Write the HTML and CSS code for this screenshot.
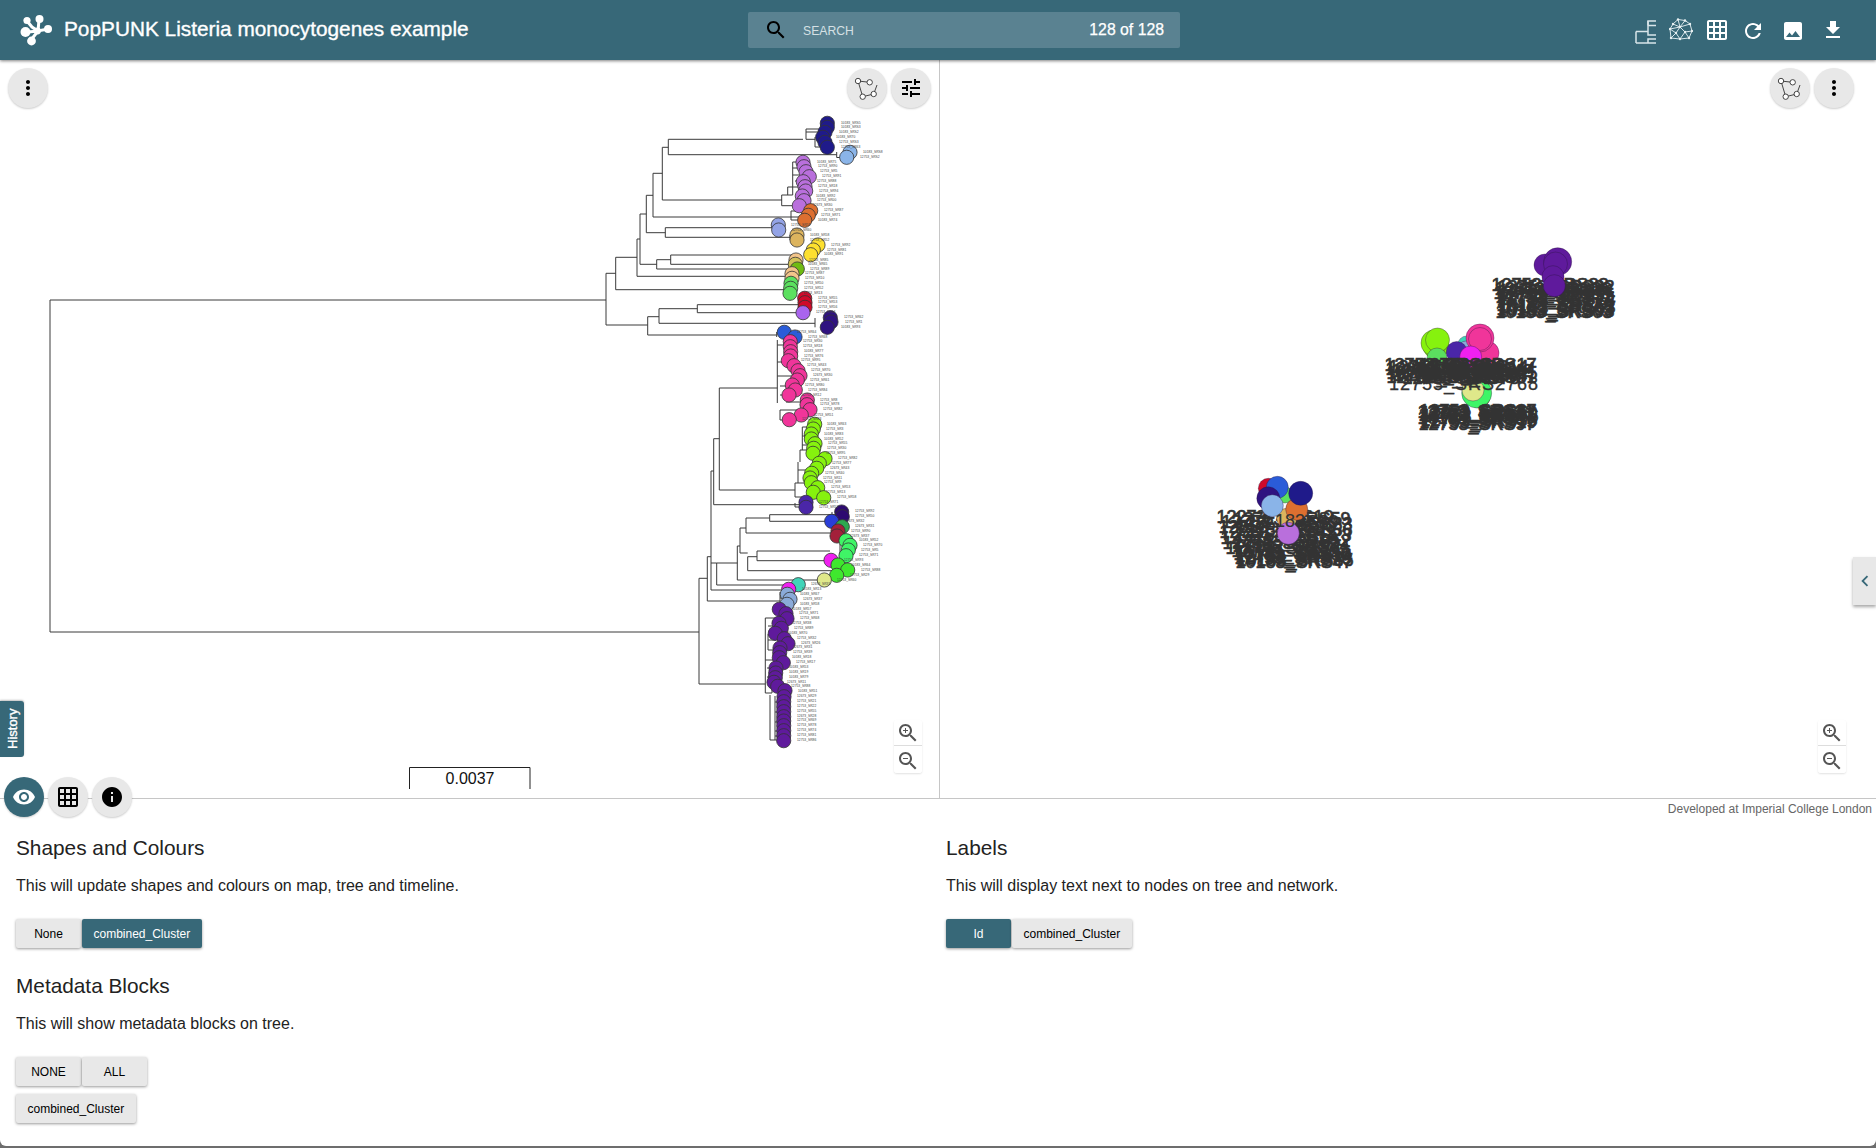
FILE: index.html
```html
<!DOCTYPE html>
<html lang="en">
<head>
<meta charset="utf-8">
<title>PopPUNK Listeria monocytogenes example</title>
<link rel="stylesheet" href="styles.css">
</head>
<body>
<div class="app">
<header class="topbar">
  <div class="brand">
    <svg class="logo" viewBox="0 0 36 32" aria-hidden="true">
      <path class="logo-link" d="M10 18 L20 17 M21 6 L20 17 L30 15 M20 17 L13 26 M9 7 L14 13 L20 17"/>
      <circle cx="9" cy="6.5" r="3.6"/><circle cx="21.5" cy="5" r="4"/><circle cx="30" cy="15" r="4"/><circle cx="7.5" cy="18" r="5"/><circle cx="13.5" cy="27" r="4.4"/><circle cx="19.5" cy="17" r="3.4"/>
    </svg>
    <span class="title">PopPUNK Listeria monocytogenes example</span>
  </div>
  <div class="search">
    <svg class="icon search-icon" viewBox="0 0 24 24"><path d="M15.5 14h-.79l-.28-.27C15.41 12.59 16 11.11 16 9.5 16 5.91 13.09 3 9.5 3S3 5.91 3 9.5 5.91 16 9.5 16c1.61 0 3.09-.59 4.23-1.57l.27.28v.79l5 4.99L20.49 19l-4.99-5zm-6 0C7.01 14 5 11.99 5 9.5S7.01 5 9.5 5 14 7.01 14 9.5 11.99 14 9.5 14z"/></svg>
    <span class="search-label">SEARCH</span>
    <span class="search-count">128 of 128</span>
  </div>
  <nav class="tools">
    <svg class="tool tool-line" viewBox="0 0 24 24"><path d="M2 13.5V25M2 13.5H14V7.5H22M14 7.5V17H22M14 7.5V3H22M2 25H14V21H22M14 25H22"/><path d="M14 3V7.5"/></svg>
    <svg class="tool tool-net" viewBox="0 0 24 24"><path d="M9 1.5L16 2.5L21 6L23 13L20 20L11 21L2 20L1 11L4 6ZM9 1.5L11 9L16 2.5M4 6L11 9L21 6M1 11L11 9L16 14L23 13M1 11L7 15L11 9M7 15L2 20M7 15L11 21M16 14L11 21M16 14L20 20M16 14L11 9"/><g class="net-dots"><circle cx="9" cy="1.5" r="1.2"/><circle cx="16" cy="2.5" r="1.2"/><circle cx="21" cy="6" r="1.2"/><circle cx="23" cy="13" r="1.2"/><circle cx="20" cy="20" r="1.2"/><circle cx="11" cy="21" r="1.2"/><circle cx="2" cy="20" r="1.2"/><circle cx="1" cy="11" r="1.2"/><circle cx="4" cy="6" r="1.2"/><circle cx="11" cy="9" r="1.2"/><circle cx="16" cy="14" r="1.2"/><circle cx="7" cy="15" r="1.2"/></g></svg>
    <svg class="tool tool-grid" viewBox="2 2 20 20"><path d="M20 2H4c-1.1 0-2 .9-2 2v16c0 1.1.9 2 2 2h16c1.1 0 2-.9 2-2V4c0-1.1-.9-2-2-2zM8 20H4v-4h4v4zm0-6H4v-4h4v4zm0-6H4V4h4v4zm6 12h-4v-4h4v4zm0-6h-4v-4h4v4zm0-6h-4V4h4v4zm6 12h-4v-4h4v4zm0-6h-4v-4h4v4zm0-6h-4V4h4v4z"/></svg>
    <svg class="tool tool-refresh" viewBox="0 0 24 24"><path d="M17.65 6.35C16.2 4.9 14.21 4 12 4c-4.42 0-7.99 3.58-7.99 8s3.57 8 7.99 8c3.73 0 6.84-2.55 7.73-6h-2.08c-.82 2.33-3.04 4-5.65 4-3.31 0-6-2.69-6-6s2.69-6 6-6c1.66 0 3.14.69 4.22 1.78L13 11h7V4l-2.35 2.35z"/></svg>
    <svg class="tool tool-image" viewBox="0 0 24 24"><path d="M21 19V5c0-1.1-.9-2-2-2H5c-1.1 0-2 .9-2 2v14c0 1.1.9 2 2 2h14c1.1 0 2-.9 2-2zM8.5 13.5l2.5 3.01L14.5 12l4.5 6H5l3.5-4.5z"/></svg>
    <svg class="tool tool-download" viewBox="0 0 24 24"><path d="M19 9h-4V3H9v6H5l7 7 7-7zM5 18v2h14v-2H5z"/></svg>
  </nav>
</header>

<section class="viewers">
  <div class="pane pane-tree">
    <svg class="canvas" viewBox="0 60 940 738">
      <path class="branches" d="M50 300V632M50 300H606M50 632H699
      M606 273.3V325M606 300H606M606 273.3H615.7M615.7 257.3V289.7M615.7 289.7H785M615.7 257.3H637M637 239V276.3M637 276.3H790M637 239H640M640 214V264.3M640 264.3H656.7M656.7 259.7V269M656.7 269H797M656.7 259.7H670.7M670.7 255V264.3M670.7 255H795M670.7 264.3H795M640 214H646.3M646.3 195.3V232.7M646.3 232.7H665.3M665.3 227.7V237.3M665.3 227.7H778M665.3 237.3H795M646.3 195.3H653M653 173.3V217M653 217H805M653 173.3H662.3M662.3 147.3V200M662.3 200H782M662.3 147.3H668.3M668.3 139.3V154.7M668.3 139.3H803M668.3 154.7H836.7
      M606 325H647.7M647.7 316.7V335M647.7 335H776.7M776.7 332V337M647.7 316.7H659M659 308.7V323.3M659 308.7H697.3M697.3 304.7V312.7M697.3 304.7H798M697.3 312.7H800M659 323.3H815M815 318V327.3
      M806 129V139.3M806 129H825M806 132H824M806 139.3H815M815 137V147H825M836.7 152V157.5H846
      M781.7 195V205.7H795M781.7 195H792.7M792.7 162V195M792.7 162H803M792.7 168H804M792.7 175H806M795 181H803M787.7 187V195M787.7 187H805
      M791 211V220H805M791 211H808M775 225V230H778M790 235V240H797
      M699 578.3V684M699 684H765.3M699 578.3H707.3M707.3 556.7V601M707.3 601H780M707.3 556.7H711M711 471V590M711 590H785M711 471H713.7M713.7 438.7V504.7M713.7 504.7H800M713.7 438.7H719.3M719.3 388V490M719.3 388H777.3M719.3 490H795
      M711 563H716.7M716.7 563V585M716.7 585H792M716.7 563H737.3M737.3 546V580M737.3 580H820M737.3 546H740M740 528V553M740 528H746M746 518V533M746 533H832M746 518H769.7M769.7 514.7V521.3M769.7 514.7H838M769.7 521.3H830M740 553H747.7M747.7 556.7V570.7M747.7 556.7H757M757 551V560.7M757 551H830M757 560.7H825M747.7 570.7H835
      M777.3 340V403M777.3 345H788M777.3 362H788M777.3 376H795M780 386H790M780 395H789M780 410V420H789M780 410H807M786 402H807
      M795 483V497M795 483H812M795 497H823M798 462V483M798 470H815M800 450V462M800 450H812M802.3 427V450M802.3 427H814M802.3 436H811M802.3 445H815
      M795 503V507H806M832 512V517H842M832 530V536H837M840 544V556H846M835 565V575H838
      M780 592V604M780 598H788M765.3 618V693M765.3 618H778M768 626H779M768 634V650M768 640H776M768 650H780M765.3 660H779M767 668H776M767 677H775M767 682H774M765.3 693H772V688H777M770 695V740H783M775 696V740M775 702H783M775 712H783M775 722H783M775 731H783M775 736H783"/>
      <g class="tree-nodes">
        <g class="c-navy"><circle cx="827.3" cy="123.3"/><circle cx="827.3" cy="127.3"/><circle cx="825" cy="132.3"/><circle cx="822.7" cy="137.3"/><circle cx="825" cy="142.3"/><circle cx="827.3" cy="147.3"/></g>
        <g class="c-sky"><circle cx="850" cy="152.3"/><circle cx="846.7" cy="157.3"/></g>
        <g class="c-lilac"><circle cx="803" cy="162.3"/><circle cx="804" cy="166.7"/><circle cx="806" cy="171.7"/><circle cx="809.3" cy="176.7"/><circle cx="803.3" cy="181.7"/><circle cx="805" cy="186.7"/><circle cx="805.7" cy="191"/><circle cx="802.3" cy="196"/><circle cx="804" cy="200.7"/><circle cx="799.3" cy="205.7"/></g>
        <g class="c-orange"><circle cx="810.7" cy="210.7"/><circle cx="808.3" cy="215.3"/><circle cx="804.7" cy="220.3"/></g>
        <g class="c-peri"><circle cx="778.3" cy="225"/><circle cx="778.7" cy="230"/></g>
        <g class="c-tan"><circle cx="797" cy="235"/><circle cx="797" cy="240"/></g>
        <g class="c-yellow"><circle cx="818" cy="245"/><circle cx="813.3" cy="250"/><circle cx="810.7" cy="254.7"/></g>
        <g class="c-peach"><circle cx="796" cy="260"/></g>
        <g class="c-khaki"><circle cx="795.3" cy="264.3"/></g>
        <g class="c-olive"><circle cx="797.3" cy="269"/></g>
        <g class="c-peach"><circle cx="792" cy="273.7"/><circle cx="792" cy="278.3"/></g>
        <g class="c-green"><circle cx="791" cy="283.3"/><circle cx="790.7" cy="288.3"/><circle cx="790" cy="293.3"/></g>
        <g class="c-crimson"><circle cx="804.7" cy="298.3"/><circle cx="805" cy="302.7"/><circle cx="805" cy="307.3"/></g>
        <g class="c-violet"><circle cx="803" cy="312.7"/></g>
        <g class="c-ink"><circle cx="830.3" cy="317.7"/><circle cx="831" cy="322"/><circle cx="827.3" cy="327.3"/></g>
        <g class="c-blue"><circle cx="784.3" cy="332.3"/><circle cx="795" cy="337"/></g>
        <g class="c-pink"><circle cx="790.3" cy="341.7"/><circle cx="790.3" cy="346.7"/><circle cx="790.7" cy="351.7"/><circle cx="790.7" cy="356"/><circle cx="788.3" cy="360.7"/><circle cx="794" cy="365.7"/><circle cx="798" cy="370.7"/><circle cx="800" cy="375.7"/><circle cx="797.3" cy="380"/><circle cx="792.3" cy="385"/><circle cx="795.3" cy="390"/><circle cx="789" cy="395"/><circle cx="807.3" cy="400"/><circle cx="807" cy="404.7"/><circle cx="810" cy="409.7"/><circle cx="801.3" cy="415"/><circle cx="789.3" cy="419.7"/></g>
        <g class="c-lime"><circle cx="814.7" cy="424.3"/><circle cx="813.3" cy="429"/><circle cx="811.3" cy="434"/><circle cx="811.3" cy="439"/><circle cx="815" cy="443.7"/><circle cx="813.7" cy="448.3"/><circle cx="813" cy="453.3"/><circle cx="825" cy="458.7"/><circle cx="819.3" cy="463.3"/><circle cx="816.7" cy="468.3"/><circle cx="811.7" cy="473.3"/><circle cx="810" cy="478"/><circle cx="811.3" cy="482.7"/><circle cx="817.7" cy="487.7"/><circle cx="813.3" cy="492.3"/><circle cx="823.7" cy="497.7"/></g>
        <g class="c-indigo"><circle cx="806" cy="502.3"/><circle cx="806" cy="507.3"/></g>
        <g class="c-plum"><circle cx="841.7" cy="512"/><circle cx="842.3" cy="516.7"/></g>
        <g class="c-royal"><circle cx="831.7" cy="521.3"/></g>
        <g class="c-forest"><circle cx="842.3" cy="526.7"/></g>
        <g class="c-maroon"><circle cx="838" cy="531"/><circle cx="837" cy="536"/></g>
        <g class="c-mint"><circle cx="846" cy="540.7"/><circle cx="850" cy="545.3"/><circle cx="848.3" cy="550"/><circle cx="846" cy="555.7"/></g>
        <g class="c-magenta"><circle cx="831" cy="560.3"/></g>
        <g class="c-leaf"><circle cx="838" cy="565"/><circle cx="847.7" cy="570"/><circle cx="836.7" cy="575.3"/></g>
        <g class="c-pale"><circle cx="824.3" cy="580"/></g>
        <g class="c-teal"><circle cx="798.3" cy="584.7"/></g>
        <g class="c-magenta"><circle cx="788.7" cy="589.3"/></g>
        <g class="c-steel"><circle cx="787.3" cy="594.3"/><circle cx="790" cy="599.3"/><circle cx="787" cy="604.3"/></g>
        <g class="c-purple"><circle cx="779.3" cy="609.3"/><circle cx="786" cy="613.7"/><circle cx="787" cy="618.7"/><circle cx="779" cy="623.3"/><circle cx="781.3" cy="628.3"/><circle cx="775.3" cy="633.3"/><circle cx="784.3" cy="638.7"/><circle cx="788" cy="643.7"/><circle cx="780" cy="648"/><circle cx="779.7" cy="652.7"/><circle cx="779.3" cy="657.7"/><circle cx="783.3" cy="662.7"/><circle cx="776" cy="668"/><circle cx="775.7" cy="673"/><circle cx="775.3" cy="677.7"/><circle cx="774" cy="682.3"/><circle cx="777.7" cy="686.3"/><circle cx="785" cy="690.7"/><circle cx="784" cy="696.7"/><circle cx="783.7" cy="701.7"/><circle cx="783.7" cy="706.7"/><circle cx="783.7" cy="711.7"/><circle cx="783.7" cy="716.7"/><circle cx="783.7" cy="721"/><circle cx="783.7" cy="725.7"/><circle cx="783.7" cy="730.7"/><circle cx="783.7" cy="735.7"/><circle cx="783.7" cy="740.7"/></g>
      </g>
      <g class="leaf-labels">
        <text x="841" y="124">10183_SRS5</text><text x="841" y="128">10183_SRS3</text><text x="839" y="133">10183_SRS2</text><text x="836" y="138">10183_SR70</text><text x="839" y="143">12753_SRS3</text><text x="841" y="148">12753_SR63</text>
        <text x="863" y="153">10183_SRS8</text><text x="860" y="158">12753_SRS2</text>
        <text x="817" y="163">10183_SR75</text><text x="818" y="167">12753_SR90</text><text x="820" y="172">12753_SR5</text><text x="822" y="177">12753_SR91</text><text x="817" y="182">12753_SR88</text><text x="818" y="187">12753_SR18</text><text x="819" y="192">12753_SR94</text><text x="816" y="197">10183_SR92</text><text x="817" y="201">12753_SR00</text><text x="813" y="206">12673_SR30</text>
        <text x="824" y="211">12753_SR87</text><text x="821" y="216">12753_SR71</text><text x="818" y="221">10183_SR74</text>
        <text x="791" y="226">12753_SR59</text><text x="792" y="231">12753_SR60</text><text x="810" y="236">10183_SR58</text><text x="810" y="241">12753_SR52</text>
        <text x="831" y="246">12753_SR92</text><text x="827" y="251">12753_SR81</text><text x="824" y="255">10183_SR91</text>
        <text x="809" y="261">12753_SR85</text><text x="808" y="265">10183_SR65</text><text x="810" y="270">12753_SR89</text><text x="805" y="274">12753_SR87</text><text x="805" y="279">12753_SR10</text><text x="804" y="284">12753_SR50</text><text x="804" y="289">12753_SR52</text><text x="803" y="294">12753_SR13</text>
        <text x="818" y="299">12753_SR55</text><text x="818" y="303">12753_SR53</text><text x="818" y="308">12753_SR56</text><text x="816" y="313">12753_SR44</text>
        <text x="844" y="318">12753_SR62</text><text x="845" y="323">12753_SR1</text><text x="841" y="328">10183_SR93</text>
        <text x="797" y="333">12753_SR64</text><text x="808" y="338">12753_SR68</text>
        <text x="803" y="342">12753_SR30</text><text x="803" y="347">12753_SR18</text><text x="804" y="352">10183_SR77</text><text x="804" y="357">12753_SR76</text><text x="801" y="361">12753_SR95</text><text x="807" y="366">12753_SR43</text><text x="811" y="371">12753_SR70</text><text x="813" y="376">12673_SR30</text><text x="810" y="381">12753_SR61</text><text x="805" y="386">12753_SR80</text><text x="808" y="391">12753_SR84</text><text x="802" y="396">12753_SR12</text><text x="820" y="401">12753_SR8</text><text x="820" y="405">12753_SR78</text><text x="823" y="410">12753_SR82</text><text x="814" y="416">12753_SR51</text><text x="802" y="420">12753_SR83</text>
        <text x="827" y="425">10183_SR63</text><text x="826" y="430">12753_SR3</text><text x="824" y="435">10183_SR83</text><text x="824" y="440">10183_SR52</text><text x="828" y="444">12753_SR55</text><text x="827" y="449">12753_SR30</text><text x="826" y="454">12753_SR95</text><text x="838" y="459">12753_SR82</text><text x="832" y="464">12753_SR77</text><text x="830" y="469">12673_SR43</text><text x="825" y="474">12753_SR40</text><text x="823" y="479">12753_SR11</text><text x="824" y="483">12753_SR9</text><text x="831" y="488">12753_SR53</text><text x="826" y="493">12753_SR13</text><text x="837" y="498">12753_SR58</text>
        <text x="819" y="503">12753_SR71</text><text x="819" y="508">12753_SR52</text><text x="855" y="512">12753_SR92</text><text x="855" y="517">12753_SR50</text><text x="845" y="522">12673_SR32</text><text x="855" y="527">12673_SR31</text><text x="851" y="532">12753_SR90</text><text x="850" y="537">12673_SR37</text>
        <text x="859" y="541">10183_SR52</text><text x="863" y="546">12753_SR70</text><text x="861" y="551">12753_SR5</text><text x="859" y="556">12753_SR71</text><text x="844" y="561">12753_SR93</text><text x="851" y="566">10183_SR64</text><text x="861" y="571">12753_SR88</text><text x="850" y="576">12753_SR29</text><text x="837" y="581">12753_SR60</text><text x="811" y="585">12673_SR33</text>
        <text x="802" y="590">10183_SR13</text><text x="800" y="595">10183_SR67</text><text x="803" y="600">12673_SR37</text><text x="800" y="605">10183_SR58</text><text x="792" y="610">10183_SR57</text><text x="799" y="614">12753_SR71</text><text x="800" y="619">12753_SR68</text><text x="792" y="624">12753_SR38</text><text x="794" y="629">12753_SR89</text><text x="788" y="634">10183_SR70</text><text x="797" y="639">12753_SR32</text><text x="801" y="644">12673_SR26</text><text x="793" y="648">12673_SR31</text><text x="793" y="653">12753_SR39</text><text x="792" y="658">10183_SR18</text><text x="796" y="663">12753_SR17</text><text x="789" y="668">10183_SR53</text><text x="789" y="673">10183_SR19</text><text x="789" y="678">10183_SR79</text><text x="787" y="683">12673_SR11</text><text x="791" y="687">12753_SR88</text><text x="798" y="692">10183_SR51</text><text x="797" y="697">12673_SR29</text><text x="797" y="702">12753_SR21</text><text x="797" y="707">12753_SR22</text><text x="797" y="712">12753_SR55</text><text x="797" y="717">12673_SR28</text><text x="797" y="721">12753_SR69</text><text x="797" y="726">12753_SR78</text><text x="797" y="731">12753_SR74</text><text x="797" y="736">12753_SR81</text><text x="797" y="741">12753_SR86</text>
      </g>
      <path class="scale-line" d="M409.5 789V767.5H530V789"/>
      <text class="scale-text" x="470" y="784">0.0037</text>
    </svg>
    <button class="fab pos-tl"><svg class="icon" viewBox="0 0 24 24"><path d="M12 8c1.1 0 2-.9 2-2s-.9-2-2-2-2 .9-2 2 .9 2 2 2zm0 2c-1.1 0-2 .9-2 2s.9 2 2 2 2-.9 2-2-.9-2-2-2zm0 6c-1.1 0-2 .9-2 2s.9 2 2 2 2-.9 2-2-.9-2-2-2z"/></svg></button>
    <div class="fab-group">
      <button class="fab"><svg class="icon graph-icon" viewBox="0 0 24 24"><path d="M3 5L14.7 6.3M3 5L7.7 20.7L18.7 18L22 9"/><circle cx="3" cy="5" r="2.7"/><circle cx="14.7" cy="6.3" r="2.7"/><circle cx="18.7" cy="18" r="2.7"/><circle cx="7.7" cy="20.7" r="2.7"/></svg></button>
      <button class="fab"><svg class="icon" viewBox="0 0 24 24"><path d="M3 17v2h6v-2H3zM3 5v2h10V5H3zm10 16v-2h8v-2h-8v-2h-2v6h2zM7 9v2H3v2h4v2h2V9H7zm14 4v-2H11v2h10zm-6-4h2V7h4V5h-4V3h-2v6z"/></svg></button>
    </div>
    <button class="history">History</button>
    <div class="zoomer">
      <svg class="icon zoom-icon" viewBox="0 0 24 24"><path d="M15.5 14h-.79l-.28-.27C15.41 12.59 16 11.11 16 9.5 16 5.91 13.09 3 9.5 3S3 5.91 3 9.5 5.91 16 9.5 16c1.61 0 3.09-.59 4.23-1.57l.27.28v.79l5 4.99L20.49 19l-4.99-5zm-6 0C7.01 14 5 11.99 5 9.5S7.01 5 9.5 5 14 7.01 14 9.5 11.99 14 9.5 14zm2.5-4h-2v2H9v-2H7V9h2V7h1v2h2v1z"/></svg>
      <svg class="icon zoom-icon" viewBox="0 0 24 24"><path d="M15.5 14h-.79l-.28-.27C15.41 12.59 16 11.11 16 9.5 16 5.91 13.09 3 9.5 3S3 5.91 3 9.5 5.91 16 9.5 16c1.61 0 3.09-.59 4.23-1.57l.27.28v.79l5 4.99L20.49 19l-4.99-5zm-6 0C7.01 14 5 11.99 5 9.5S7.01 5 9.5 5 14 7.01 14 9.5 11.99 14 9.5 14zM7 9h5v1H7z"/></svg>
    </div>
  </div>
  <div class="pane pane-net">
    <svg class="canvas" viewBox="940 60 936 738">
      <g class="net-labels">
        <text x="1550" y="291">12753_SRS88</text><text x="1556" y="293">12753_SRS92</text><text x="1553" y="295">12673_SRS26</text><text x="1557" y="297">12753_SRS81</text><text x="1552" y="299">12753_SRS68</text><text x="1556" y="301">12753_SRS55</text><text x="1554" y="303">12753_SRS71</text><text x="1557" y="305">12753_SRS14</text>
        <text x="1555" y="311">10183_SRS79</text><text x="1557" y="313">10183_SRS53</text><text x="1555" y="315">10183_SRS63</text><text x="1556" y="317">10183_SRS93</text><text x="1554" y="318">10183_SRS03</text>
        <text x="1275" y="523">12273_SRS10</text><text x="1292" y="525">12753_SRS59</text><text x="1280" y="528">12753_SRS89</text><text x="1294" y="530">12753_SRS33</text>
        <text x="1277" y="533">12753_SRS90</text><text x="1294" y="536">12753_SRS56</text><text x="1278" y="538">12753_SRS41</text><text x="1293" y="541">12753_SRS23</text><text x="1279" y="544">12753_SRS16</text><text x="1292" y="547">12753_SRS52</text><text x="1281" y="549">12753_SRS62</text><text x="1291" y="552">12753_SRS74</text><text x="1284" y="554">12673_SRS71</text><text x="1290" y="557">12753_SRS67</text>
        <text x="1292" y="560">10183_SRS80</text><text x="1294" y="562">12753_SRS14</text><text x="1293" y="564">12753_SRS78</text><text x="1295" y="566">10183_SRS85</text><text x="1294" y="568">10183_SRS47</text>
      </g>
      <g class="net-nodes">
        <g class="c-purple"><circle cx="1545" cy="265" r="11"/><circle cx="1557.7" cy="261.7" r="14"/><circle cx="1555.5" cy="264" r="12"/><circle cx="1553" cy="276.7" r="11"/><circle cx="1554.3" cy="285.7" r="11"/></g>
        <g class="c-lime"><circle cx="1436" cy="346" r="13"/><circle cx="1434" cy="343" r="13"/><circle cx="1437.5" cy="340" r="12"/></g>
        <g class="c-green"><circle cx="1437" cy="358" r="10"/></g>
        <g class="c-teal"><circle cx="1466.7" cy="345" r="9"/></g>
        <g class="c-steel"><circle cx="1466" cy="349" r="8"/></g>
        <g class="c-indigo"><circle cx="1456.7" cy="352" r="10.5"/></g>
        <g class="c-pink"><circle cx="1487" cy="353" r="12"/><circle cx="1480" cy="338" r="14"/><circle cx="1480" cy="339" r="11.5"/></g>
        <g class="c-magenta"><circle cx="1470.7" cy="357" r="11"/></g>
        <g class="c-crimson"><circle cx="1479" cy="397" r="11"/></g>
        <g class="c-mint"><circle cx="1476.7" cy="393" r="15"/></g>
        <g class="c-pale"><circle cx="1473" cy="390" r="11"/></g>
        <g class="c-crimson"><circle cx="1268.3" cy="488.3" r="10"/></g>
        <g class="c-green"><circle cx="1285" cy="495" r="8"/></g>
        <g class="c-blue"><circle cx="1277.3" cy="487.3" r="11"/></g>
        <g class="c-tan"><circle cx="1286.7" cy="518.3" r="10"/></g>
        <g class="c-ink"><circle cx="1268.3" cy="498.3" r="11.5"/></g>
        <g class="c-orange"><circle cx="1296.7" cy="509.3" r="11"/></g>
        <g class="c-navy"><circle cx="1300.7" cy="493.3" r="12"/></g>
        <g class="c-sky"><circle cx="1272.3" cy="505.7" r="11"/></g>
        <g class="c-lilac"><circle cx="1288.3" cy="533.3" r="11"/></g>
      </g>
      <g class="net-labels">
        <text x="1443" y="371">12753_SRS88</text><text x="1478" y="371">12753_SRS17</text><text x="1447" y="373">12753_SRS92</text><text x="1470" y="373">12753_SRS14</text><text x="1444" y="375">12673_SRS30</text><text x="1477" y="375">12753_SRS44</text><text x="1450" y="377">12753_SRS43</text><text x="1474" y="377">12753_SRS42</text><text x="1445" y="379">12753_SRS61</text><text x="1479" y="379">12753_SRS25</text><text x="1452" y="381">12753_SRS80</text><text x="1470" y="381">12753_SRS37</text><text x="1445" y="383">12753_SRS12</text><text x="1478" y="383">12753_SRS51</text><text x="1461" y="384">12753_SRS78</text>
        <text class="wide-row" x="1464" y="390">12753_SRS2768</text>
        <text x="1478" y="417">12753_SRS87</text><text x="1476" y="418">12753_SRS21</text><text x="1479" y="419">12673_SRS50</text><text x="1477" y="421">12753_SRS27</text><text x="1480" y="422">12753_SRS66</text><text x="1476" y="424">10183_SRS07</text><text x="1479" y="426">12753_SRS38</text><text x="1478" y="428">12753_SRS19</text><text x="1477" y="430">12753_SRS97</text>
        <text class="big-num" x="1290" y="527">183</text>
      </g>
    </svg>
    <div class="fab-group">
      <button class="fab"><svg class="icon graph-icon" viewBox="0 0 24 24"><path d="M3 5L14.7 6.3M3 5L7.7 20.7L18.7 18L22 9"/><circle cx="3" cy="5" r="2.7"/><circle cx="14.7" cy="6.3" r="2.7"/><circle cx="18.7" cy="18" r="2.7"/><circle cx="7.7" cy="20.7" r="2.7"/></svg></button>
      <button class="fab"><svg class="icon" viewBox="0 0 24 24"><path d="M12 8c1.1 0 2-.9 2-2s-.9-2-2-2-2 .9-2 2 .9 2 2 2zm0 2c-1.1 0-2 .9-2 2s.9 2 2 2 2-.9 2-2-.9-2-2-2zm0 6c-1.1 0-2 .9-2 2s.9 2 2 2 2-.9 2-2-.9-2-2-2z"/></svg></button>
    </div>
    <button class="drawer-tab"><svg class="icon chevron" viewBox="0 0 24 24"><path d="M15.41 7.41L14 6l-6 6 6 6 1.41-1.41L10.83 12z"/></svg></button>
    <div class="zoomer">
      <svg class="icon zoom-icon" viewBox="0 0 24 24"><path d="M15.5 14h-.79l-.28-.27C15.41 12.59 16 11.11 16 9.5 16 5.91 13.09 3 9.5 3S3 5.91 3 9.5 5.91 16 9.5 16c1.61 0 3.09-.59 4.23-1.57l.27.28v.79l5 4.99L20.49 19l-4.99-5zm-6 0C7.01 14 5 11.99 5 9.5S7.01 5 9.5 5 14 7.01 14 9.5 11.99 14 9.5 14zm2.5-4h-2v2H9v-2H7V9h2V7h1v2h2v1z"/></svg>
      <svg class="icon zoom-icon" viewBox="0 0 24 24"><path d="M15.5 14h-.79l-.28-.27C15.41 12.59 16 11.11 16 9.5 16 5.91 13.09 3 9.5 3S3 5.91 3 9.5 5.91 16 9.5 16c1.61 0 3.09-.59 4.23-1.57l.27.28v.79l5 4.99L20.49 19l-4.99-5zm-6 0C7.01 14 5 11.99 5 9.5S7.01 5 9.5 5 14 7.01 14 9.5 11.99 14 9.5 14zM7 9h5v1H7z"/></svg>
    </div>
  </div>
  <div class="tabs">
    <button class="fab fab-active"><svg class="icon eye" viewBox="0 0 24 24"><path d="M12 4.5C7 4.5 2.73 7.61 1 12c1.73 4.39 6 7.5 11 7.5s9.27-3.11 11-7.5c-1.73-4.39-6-7.5-11-7.5zM12 17c-2.76 0-5-2.24-5-5s2.24-5 5-5 5 2.24 5 5-2.24 5-5 5zm0-8c-1.66 0-3 1.34-3 3s1.34 3 3 3 3-1.34 3-3-1.34-3-3-3z"/></svg></button>
    <button class="fab"><svg class="icon" viewBox="0 0 24 24"><path d="M20 2H4c-1.1 0-2 .9-2 2v16c0 1.1.9 2 2 2h16c1.1 0 2-.9 2-2V4c0-1.1-.9-2-2-2zM8 20H4v-4h4v4zm0-6H4v-4h4v4zm0-6H4V4h4v4zm6 12h-4v-4h4v4zm0-6h-4v-4h4v4zm0-6h-4V4h4v4zm6 12h-4v-4h4v4zm0-6h-4v-4h4v4zm0-6h-4V4h4v4z"/></svg></button>
    <button class="fab"><svg class="icon" viewBox="0 0 24 24"><path d="M12 2C6.48 2 2 6.48 2 12s4.48 10 10 10 10-4.48 10-10S17.52 2 12 2zm1 15h-2v-6h2v6zm0-8h-2V7h2v2z"/></svg></button>
  </div>
</section>

<p class="credit">Developed at Imperial College London</p>

<main class="settings">
  <div class="column">
    <h2>Shapes and Colours</h2>
    <p class="hint">This will update shapes and colours on map, tree and timeline.</p>
    <div class="btn-row">
      <button class="btn">None</button>
      <button class="btn btn-on">combined_Cluster</button>
    </div>
    <h2 class="next">Metadata Blocks</h2>
    <p class="hint">This will show metadata blocks on tree.</p>
    <div class="btn-row">
      <button class="btn">NONE</button>
      <button class="btn">ALL</button>
    </div>
    <div class="btn-row btn-row-next">
      <button class="btn">combined_Cluster</button>
    </div>
  </div>
  <div class="column">
    <h2>Labels</h2>
    <p class="hint">This will display text next to nodes on tree and network.</p>
    <div class="btn-row">
      <button class="btn btn-on">Id</button>
      <button class="btn">combined_Cluster</button>
    </div>
  </div>
</main>
</div>
</body>
</html>
```

FILE: styles.css
```css
* { box-sizing: border-box; }
html, body { margin: 0; height: 100%; }
body {
  background: #6d6d6d;
  font-family: "Liberation Sans", Arial, sans-serif;
  color: #222;
  overflow: hidden;
}
.app {
  height: 1146px;
  background: #fff;
  border-radius: 0 0 6px 6px;
  overflow: hidden;
  display: flex;
  flex-direction: column;
}
button { font-family: inherit; border: 0; padding: 0; cursor: pointer; }

/* top bar */
.topbar {
  height: 60px;
  flex: none;
  background: #376878;
  box-shadow: 0 1px 3px rgba(0, 0, 0, .5);
  display: flex;
  align-items: center;
  position: relative;
  z-index: 3;
}
.brand { width: 748px; flex: none; display: flex; align-items: center; padding-left: 18px; }
.logo { width: 36px; height: 32px; fill: #fff; flex: none; }
.logo-link { stroke: #fff; stroke-width: 3; fill: none; }
.title { margin: 0 0 2px 10px; color: #fff; font-size: 20.8px; font-weight: 500; -webkit-text-stroke: .35px #fff; white-space: nowrap; }
.search {
  width: 432px;
  height: 36px;
  flex: none;
  background: #5a8291;
  border-radius: 2px;
  display: flex;
  align-items: center;
  color: #fff;
  padding: 0 16px 0 16px;
}
.search-icon { width: 24px; height: 24px; fill: #e6eef0; flex: none; }
.search-label { margin: 2px 0 0 15px; font-size: 12.2px; color: #d5e0e4; }
.search-count { margin-left: auto; font-size: 15.8px; font-weight: 500; -webkit-text-stroke: .25px #fff; }
.tools { flex: 1; position: relative; height: 60px; }
.tool { position: absolute; fill: #fff; }
.tool-line { left: 454px; top: 18px; width: 24px; height: 24px; fill: none; stroke: #d8e5e9; stroke-width: 1.5; overflow: visible; }
.tool-net { left: 489px; top: 18px; width: 24px; height: 24px; fill: none; stroke: #d8e5e9; stroke-width: 1; }
.net-dots { fill: #e8f0f2; stroke: none; }
.tool-grid { left: 527px; top: 20px; width: 20px; height: 20px; }
.tool-refresh { left: 561px; top: 19px; width: 24px; height: 24px; }
.tool-image { left: 601px; top: 19px; width: 24px; height: 24px; }
.tool-download { left: 641px; top: 18px; width: 24px; height: 24px; }

/* viewers */
.viewers {
  height: 739px;
  flex: none;
  display: flex;
  position: relative;
  border-bottom: 1px solid #c6c6c6;
}
.pane { position: relative; }
.pane-tree { width: 940px; flex: none; border-right: 1px solid #c6c6c6; }
.pane-net { flex: 1; }
.canvas { position: absolute; inset: 0; width: 100%; height: 100%; display: block; }
.pane-tree .canvas { width: 940px; }

.branches { fill: none; stroke: #3a3a3a; stroke-width: 1; }
.tree-nodes circle { r: 7.1px; stroke: #333; stroke-width: .8; }
.leaf-labels { font-size: 3.3px; fill: #444; }
.net-nodes circle { stroke: rgba(40, 20, 60, .35); stroke-width: 1; }
.net-labels { font-size: 18px; fill: #333; stroke: #333; stroke-width: .7; text-anchor: middle; }
.wide-row { letter-spacing: 1px; stroke-width: .3; }
.big-num { stroke-width: .1; }
.scale-line { fill: none; stroke: #222; stroke-width: 1; }
.scale-text { font-size: 16px; fill: #111; text-anchor: middle; }

.c-navy { fill: #1f1a8a; } .c-sky { fill: #8ab4e8; } .c-lilac { fill: #b96fdc; }
.c-orange { fill: #dd6f30; } .c-peri { fill: #93a3e6; } .c-tan { fill: #dcb45e; }
.c-yellow { fill: #fde02f; } .c-peach { fill: #f2c48a; } .c-khaki { fill: #d3c25a; }
.c-olive { fill: #6fbb12; } .c-green { fill: #5be05f; } .c-crimson { fill: #cf0a2a; }
.c-violet { fill: #a964ee; } .c-ink { fill: #2f1280; } .c-blue { fill: #2a5cd8; }
.c-pink { fill: #f0359a; } .c-lime { fill: #86f20e; } .c-indigo { fill: #4a26a8; }
.c-plum { fill: #2d0a70; } .c-royal { fill: #2a3ed8; } .c-forest { fill: #2ea84f; }
.c-maroon { fill: #a3203a; } .c-mint { fill: #3ff566; } .c-magenta { fill: #f020f0; }
.c-leaf { fill: #3fe82e; } .c-pale { fill: #dfe88a; } .c-teal { fill: #40d4b8; }
.c-steel { fill: #8aaad8; } .c-purple { fill: #5f1a9c; }

/* round buttons */
.fab {
  width: 40px;
  height: 40px;
  border-radius: 50%;
  background: #e8e8e8;
  box-shadow: 0 1px 2px rgba(0, 0, 0, .2);
  display: flex;
  align-items: center;
  justify-content: center;
  flex: none;
}
.icon { width: 24px; height: 24px; fill: #000; display: block; }
.graph-icon { fill: #fff; stroke: #333; stroke-width: .9; overflow: visible; }
.graph-icon path { fill: none; }
.pos-tl { position: absolute; left: 8px; top: 8px; z-index: 1; }
.fab-group { position: absolute; top: 8px; right: 8px; display: flex; gap: 4px; z-index: 1; }
.pane-net .fab-group { right: 22px; }
.fab-active { background: #376878; }
.eye { fill: #fff; }
.tabs {
  position: absolute;
  left: 4px;
  top: 717px;
  display: flex;
  gap: 4px;
  z-index: 2;
}

.history {
  position: absolute;
  left: 0;
  top: 641px;
  width: 24px;
  height: 56px;
  background: #376878;
  color: #fff;
  font-size: 13px;
  -webkit-text-stroke: .35px #fff;
  writing-mode: vertical-rl;
  rotate: 180deg;
  box-shadow: 0 1px 2px rgba(0, 0, 0, .25);
  border-radius: 3px 0 0 3px;
}

.zoomer {
  position: absolute;
  top: 660px;
  width: 28px;
  height: 53px;
  border-radius: 3px;
  box-shadow: 0 1px 2px rgba(0, 0, 0, .12);
  display: flex;
  flex-direction: column;
  align-items: center;
  justify-content: space-between;
  background: linear-gradient(#fff 0 25.5px, #ddd 25.5px 26.5px, #fff 26.5px);
}
.pane-tree .zoomer { right: 17px; }
.pane-net .zoomer { right: 30px; }
.zoom-icon { fill: #555; width: 24px; height: 24px; margin-top: 1px; }

.drawer-tab {
  position: absolute;
  right: 0;
  top: 497px;
  width: 23px;
  height: 48px;
  background: #e8e8e8;
  box-shadow: 0 2px 3px rgba(0, 0, 0, .35);
  display: flex;
  align-items: center;
  justify-content: center;
}
.chevron { fill: #376878; width: 22px; height: 22px; }

/* lower settings */
.credit {
  margin: 0;
  height: 20px;
  flex: none;
  text-align: right;
  padding-right: 4px;
  font-size: 12px;
  line-height: 20px;
  color: #666;
}
.settings {
  display: grid;
  grid-template-columns: 946px 1fr;
}
.column { padding: 17px 0 0 16px; }
.column + .column { padding-left: 0; }
h2 { margin: 0; font-size: 20.8px; line-height: 24px; font-weight: 400; color: #222; }
h2.next { margin-top: 26px; }
.hint { margin: 16px 0 23px; font-size: 16px; line-height: 20px; color: #222; }
.btn-row { display: flex; gap: 1px; }
.btn-row-next { margin-top: 8px; }
.btn {
  height: 29px;
  min-width: 65px;
  padding: 0 11.5px;
  background: #e8e8e8;
  color: #000;
  font-size: 12px;
  border-radius: 2px;
  box-shadow: 0 1px 3px rgba(0, 0, 0, .4);
}
.btn-on { background: #376878; color: #fff; }
```
